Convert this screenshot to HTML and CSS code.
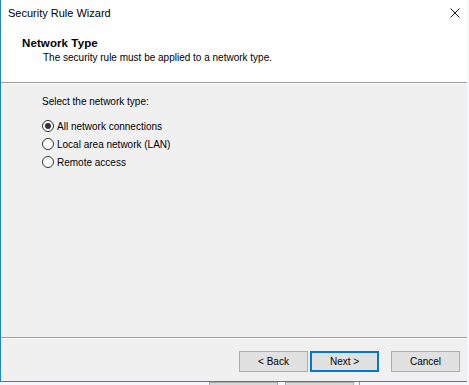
FILE: index.html
```html
<!DOCTYPE html>
<html>
<head>
<meta charset="utf-8">
<link rel="stylesheet" href="styles.css">
</head>
<body>
<div class="window">
  <div class="titlebar">
    <span class="title">Security Rule Wizard</span>
    <svg class="close" width="10" height="10" viewBox="0 0 10 10"><path d="M0.5 0.5L9.5 9.5M9.5 0.5L0.5 9.5" stroke="#1a1a1a" stroke-width="1"/></svg>
  </div>
  <div class="header">
    <div class="h-title">Network Type</div>
    <div class="h-sub">The security rule must be applied to a network type.</div>
  </div>
  <div class="content">
    <div class="prompt">Select the network type:</div>
    <div class="options">
      <label class="opt"><span class="radio checked"></span>All network connections</label>
      <label class="opt"><span class="radio"></span>Local area network (LAN)</label>
      <label class="opt"><span class="radio"></span>Remote access</label>
    </div>
  </div>
  <div class="footer">
    <button class="btn">&lt; Back</button>
    <button class="btn default">Next &gt;</button>
    <button class="btn cancel">Cancel</button>
  </div>
</div>
<div class="behind">
  <span class="bb b1"></span><span class="bb b2"></span><span class="bsep"></span>
</div>
</body>
</html>
```
FILE: styles.css
```css
* { box-sizing: border-box; }
html, body { margin: 0; padding: 0; }
body {
  width: 469px;
  height: 385px;
  background: #f4f7fb;
  font-family: "Liberation Sans", Arial, sans-serif;
  font-size: 10px;
  color: #000;
  overflow: hidden;
}
.window {
  width: 467px;
  height: 382px;
  border-left: 1px solid #1a84d8;
  border-bottom: 1px solid #1a84d8;
  background: #f0f0f0;
  display: flex;
  flex-direction: column;
}
.titlebar {
  height: 28px;
  background: #fff;
  display: flex;
  align-items: center;
  justify-content: space-between;
  padding: 0 7px 0 7px;
}
.title { font-size: 11px; position: relative; top: -1px; }
.close { position: relative; top: -1px; }
.header {
  height: 55px;
  background: #fff;
  border-bottom: 1px solid #a0a0a0;
  padding: 9px 0 0 21px;
}
.h-title { font-weight: bold; font-size: 11.5px; height: 14px; letter-spacing: 0.1px; }
.h-sub { padding-left: 21px; height: 14px; line-height: 14px; }
.content {
  flex: 1;
  border-top: 1px solid #fff;
  border-bottom: 1px solid #a0a0a0;
  padding: 11px 0 0 41px;
}
.prompt { height: 14px; line-height: 14px; margin-bottom: 10px; }
.options { display: flex; flex-direction: column; gap: 4px; }
.opt { display: flex; align-items: center; height: 14px; }
.radio {
  width: 12px; height: 12px;
  border: 1px solid #333;
  border-radius: 50%;
  background: #fff;
  margin-right: 3px;
  display: flex; align-items: center; justify-content: center;
}
.radio.checked::after {
  content: "";
  width: 6px; height: 6px;
  border-radius: 50%;
  background: #333;
}
.footer {
  height: 43px;
  border-top: 1px solid #fff;
  display: flex;
  align-items: flex-start;
  padding: 12px 0 0 238px;
}
.btn {
  width: 69px; height: 21px;
  background: #e1e1e1;
  border: 1px solid #adadad;
  font-family: inherit;
  font-size: 10px;
  color: #000;
  padding: 0;
  margin-right: 2px;
}
.btn.default { border: 2px solid #0078d7; }
.btn.cancel { margin-left: 10px; }
.behind {
  height: 3px;
  display: flex;
  align-items: flex-start;
  padding-left: 209px;
}
.bb { width: 69px; height: 3px; background: #d9d9d9; border: 1px solid #adadad; border-bottom: 0; margin-right: 7px; }
.bsep { width: 1px; height: 3px; background: #a0a0a0; margin-left: -2px; }
```
